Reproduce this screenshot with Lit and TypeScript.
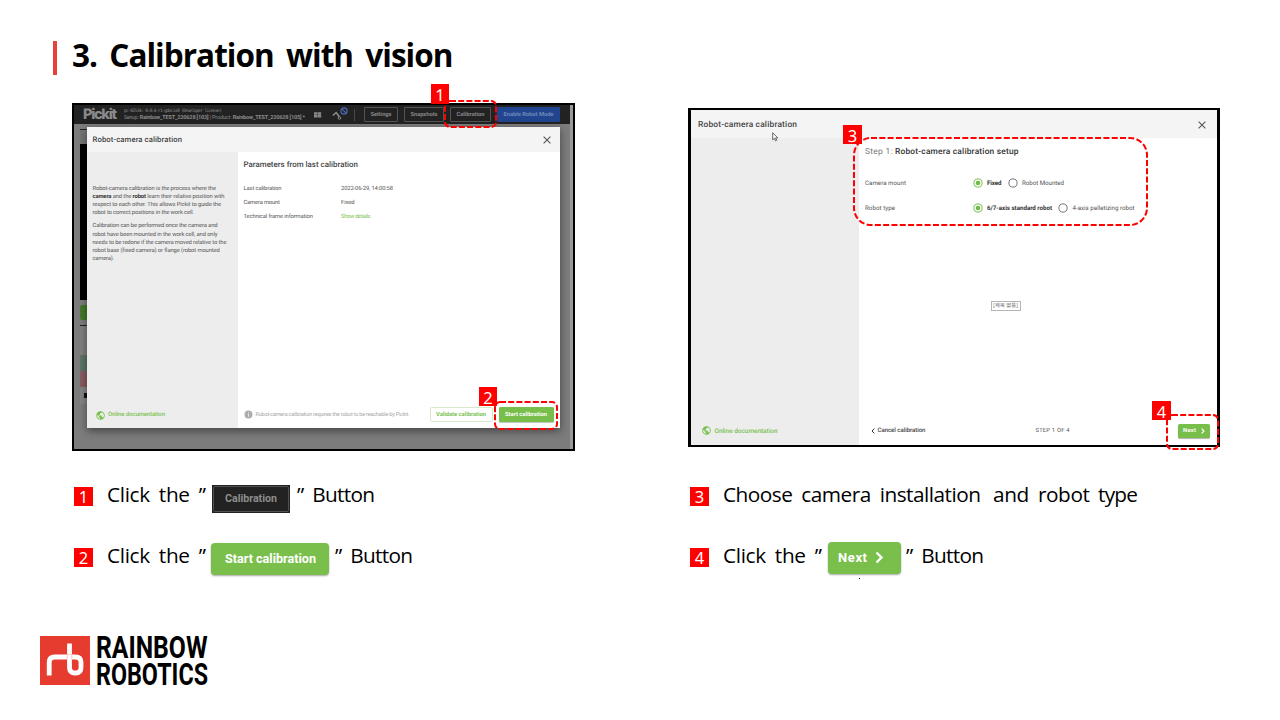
import { LitElement, html, svg, css } from "lit";
import { customElement, property } from "lit/decorators.js";

/** One line of text that fills exactly `w` pixels, by tracking or by squeezing. */
@customElement("fit-text")
class FitText extends LitElement {
  @property({ type: Number }) w = 0;
  @property({ type: Boolean }) squeeze = false;
  static styles = css`
    :host { display: block; white-space: pre; flex: none; text-align: left; }
    span { display: inline-block; transform-origin: 0 50%; vertical-align: top; }
  `;
  render() { return html`<span><slot></slot></span>`; }
  firstUpdated() {
    this.fit();
    document.fonts.ready.then(() => this.fit());
  }
  fit() {
    const s = this.renderRoot.querySelector("span") as HTMLElement;
    s.style.letterSpacing = "0px";
    s.style.transform = "none";
    this.style.width = this.w + "px";
    const natural = s.getBoundingClientRect().width;
    const n = (this.textContent || "").length;
    if (this.squeeze) s.style.transform = `scaleX(${this.w / natural})`;
    else if (n > 1) s.style.letterSpacing = (this.w - natural) / (n - 1) + "px";
  }
}

const closeIcon = svg`<svg class="x" width="8" height="8" viewBox="0 0 8 8"><path d="M.6.6 7.4 7.4M7.4.6.6 7.4" stroke="#555" stroke-width="1.1" fill="none"/></svg>`;
const globe = svg`<svg width="9" height="9" viewBox="1.500 1.500 21 21"><path fill="#76c14b" d="M12 2C6.48 2 2 6.48 2 12s4.48 10 10 10 10-4.48 10-10S17.52 2 12 2zm-1 17.93c-3.95-.49-7-3.85-7-7.93 0-.62.08-1.21.21-1.79L9 15v1c0 1.1.9 2 2 2v1.93zm6.9-2.54c-.26-.81-1-1.39-1.9-1.39h-1v-3c0-.55-.45-1-1-1H8v-2h2c.55 0 1-.45 1-1V7h2c1.1 0 2-.9 2-2v-.41c2.93 1.19 5 4.06 5 7.41 0 2.08-.8 3.97-2.1 5.39z"/></svg>`;
const radio = (on: boolean) => svg`<svg width="10" height="10" viewBox="0 0 10 10"><circle cx="5" cy="5" r="4.1" fill="#fff" stroke="${on ? "#76c14b" : "#777"}" stroke-width="1"/>${on ? svg`<circle cx="5" cy="5" r="2.3" fill="#6fbd44"/>` : ""}</svg>`;
const dashed = (w: number, h: number, r: number, dash: string) => svg`<svg width="${w}" height="${h}"><rect x="1" y="1" width="${w - 2}" height="${h - 2}" rx="${r}" fill="none" stroke="#f00" stroke-width="2" stroke-dasharray="${dash}"/></svg>`;

@customElement("app-root")
class AppRoot extends LitElement {
  static styles = css`
    :host { display: block; width: 1280px; height: 720px; background: #fff; overflow: hidden; color: #000; font-family: "Open Sans", "Noto Sans", sans-serif; }
    * { box-sizing: border-box; }
    svg { display: block; flex: none; }
    .slide { height: 720px; display: grid; grid-template-rows: 103px 382px 151px 84px; }
    header { display: flex; align-items: flex-start; padding: 41px 0 0 53px; }
    .bar { width: 4px; height: 34px; background: #e8413a; }
    .title { margin: -6px 0 0 15px; font-size: 31.5px; line-height: 40px; font-weight: 700; word-spacing: 5px; }
    .shots { display: flex; align-items: flex-start; padding-left: 72px; gap: 113px; }
    .ui { font-family: Roboto, sans-serif; text-rendering: geometricPrecision; font-size: 5.8px; color: #555; }
    .ui fit-text { line-height: 8px; }
    .shot { position: relative; border: 2px solid #000; flex: none; }
    .one { width: 503px; height: 348px; background: #7c7c7c; }
    .two { width: 532px; height: 339px; margin-top: 5px; background: #fff; border-width: 2px 3px 2px 3px; }

    .behind { display: grid; grid-template-columns: 496px 3px; height: 344px; }
    .scroll { background: #999; }
    .toolbar { height: 19px; background: #222; display: flex; align-items: center; padding-left: 9px; color: #858585; }
    .toolbar .brand { font: 800 14.5px/18px Inter, sans-serif; color: #8a8a8a; }
    .meta { margin: 1px 0 0 7px; width: 182px; }
    .meta .mono { font: 4.6px/6px "DejaVu Sans Mono", monospace; color: #8a8a8a; }
    .meta .set { line-height: 6px; font-size: 5.5px; color: #8a8a8a; }
    .meta b { color: inherit; }
    .grid { margin-left: 8px; }
    .arm { margin-left: 10px; }
    .sep { width: 1px; height: 12px; background: #484848; margin: 0 9px 0 5px; }
    .tb { height: 15px; border: 1px solid #555; border-radius: 1px; display: flex; align-items: center; justify-content: center; margin-right: 6px; font-weight: 700; font-size: 5.8px; }
    .tb.blue { background: #20458e; border-color: #20458e; color: #6d87b9; margin: 0; }
    .strip { width: 8px; margin-left: 6px; padding-top: 5px; }
    .strip div { width: 8px; }
    .s1 { height: 15px; border-top: 1px solid #222; background: #747474; }
    .s2 { height: 156px; background: #000; }
    .s3 { height: 15px; margin: 5px 0; background: #43782a; border-radius: 2px 0 0 2px; }
    .s4 { height: 30px; border-top: 1px solid #222; background: #808080; }
    .s5 { height: 16px; background: #5d7467; }
    .s6 { height: 16px; background: #875c60; }
    .s7 { height: 17px; background: #848484; padding: 6px 0 0 4px; }
    .s7 i { display: block; width: 4px; height: 5px; background: #111; }

    .modal { position: absolute; left: 12.5px; top: 22px; width: 473.5px; height: 300.5px; background: #fff; box-shadow: 0 3px 8px rgba(0,0,0,.45); }
    .mhead { background: #f4f4f4; display: flex; justify-content: space-between; align-items: center; color: #444; font-weight: 500; font-size: 7.7px; }
    .one .mhead { height: 25px; padding: 1px 9.5px 0 6px; }
    .one .mbody { display: grid; grid-template-columns: 151.5px 1fr; height: 275.5px; }
    .side { background: #ededed; display: flex; flex-direction: column; }
    .one .side { padding: 32.5px 0 9px 6px; }
    .para { margin-bottom: 5.6px; }
    .para fit-text { line-height: 8.1px; }
    b { font-weight: 700; color: #333; }
    .doc { margin-top: auto; display: flex; align-items: center; color: #7cc254; font-weight: 500; font-size: 6px; }
    .one .doc { padding: 0 0 0 3.5px; gap: 3px; }
    .one .side { padding-bottom: 8px; }
    .main { display: flex; flex-direction: column; }
    .one .main { padding: 9px 6.5px 5.5px 5.5px; }
    .h { font-weight: 500; font-size: 7.9px; color: #444; }
    .params { margin-top: 15.5px; display: grid; grid-template-columns: 97.5px auto; row-gap: 6.2px; justify-content: start; }
    .link { color: #7cc254; }
    .foot { margin-top: auto; display: flex; align-items: center; }
    .note { margin-left: 3px; color: #a5a5a5; font-size: 5.5px; }
    .btn { display: flex; align-items: center; justify-content: center; border-radius: 1.5px; font-weight: 700; background: #78be4b; color: #fff; }
    .one .btn { height: 15px; width: 55px; margin-left: 6px; box-shadow: 0 1px 1px rgba(0,0,0,.25); }
    .one .btn.ghost { width: 63px; margin-left: auto; background: #fff; border: 1px solid #d8e8cc; color: #7cc254; box-shadow: none; }

    .two .mhead { height: 28px; padding: 2px 11px 0 7px; font-size: 8.4px; }
    .two .mbody { display: grid; grid-template-columns: 168px 1fr; height: 307px; }
    .two .side { padding: 0 0 10px 11px; }
    .two .doc { gap: 3.5px; font-size: 6.5px; }
    .two .main { padding: 10px 7px 7px 6px; }
    .head2 { display: flex; font-size: 8.4px; color: #777; }
    .head2 .h { color: #333; font-size: 8.4px; }
    .opts { display: grid; grid-template-columns: 107.5px auto; row-gap: 15px; margin-top: 21.5px; justify-content: start; font-size: 6.2px; }
    .opt { display: flex; align-items: center; height: 10px; gap: 4.5px; }
    .opts > fit-text { line-height: 10px; }
    .opt .on { font-weight: 700; color: #333; margin-right: 1.5px; }
    .tip { align-self: flex-start; margin: 88px 0 0 125.5px; border: 1px solid #b5b5b5; width: 30px; height: 10px; padding: 0 1.5px; font: 5.2px/8px "Noto Sans CJK KR", sans-serif; color: #555; }
    .chev { margin: 0 3px 0 5.5px; }
    .cancel { font-weight: 500; color: #444; font-size: 6.1px; }
    .step { margin-left: 110px; color: #555; }
    .two .btn { width: 32px; height: 14px; margin-left: auto; gap: 5px; box-shadow: 0 1px 1px rgba(0,0,0,.3); }
    .cursor { position: absolute; left: 81px; top: 22px; }

    .badge { background: #f00; color: #fff; display: flex; align-items: center; justify-content: center; width: 19px; height: 19px; font-size: 16.5px; line-height: 19px; flex: none; padding-top: 1px; font-family: "Noto Sans", sans-serif; font-weight: 400; }
    .over { position: absolute; }
    .b1 { left: 357px; top: -21px; width: 18px; height: 20px; }
    .d1 { left: 370px; top: -5px; }
    .b2 { left: 405px; top: 282px; width: 18px; }
    .d2 { left: 420px; top: 296px; }
    .b3 { left: 152px; top: 15px; }
    .d3 { left: 162px; top: 27px; }
    .b4 { left: 461px; top: 291px; }
    .d4 { left: 475px; top: 304px; }

    .steps { display: grid; grid-template-columns: 616px 1fr; grid-template-rows: 28px 33px; row-gap: 29px; padding-left: 74px; font-size: 20.8px; }
    .row { display: flex; align-items: center; word-spacing: 4px; }
    .row .badge { margin-right: 14px; margin-top: -6px; }
    .row fit-text { line-height: 28px; }
    .row .lead, .row .tail { margin-top: -10px; }
    .row .low { margin-top: -8px; }
    .row .badge.lo { margin-top: -3px; }
    .snip { font-family: Roboto, sans-serif; display: flex; align-items: center; flex: none; word-spacing: 0; }
    .dark { background: #222; width: 78px; height: 28px; padding: 1px; margin: 0 7px 0 6px; }
    .dark div { border: 1px solid #505050; border-radius: 2px; width: 76px; height: 26px; padding-left: 11px; color: #8d8d8d; font-weight: 700; font-size: 10.7px; }
    .dark fit-text { line-height: 24px; }
    .green { background: #7abf4c; border-radius: 4px; color: #fff; font-weight: 700; box-shadow: 0 1px 2px rgba(0,0,0,.35); margin-top: -1px; }
    .start { width: 118px; height: 32px; padding-left: 14px; margin: 0 6px 0 5px; font-size: 12.6px; }
    .next { width: 73px; height: 32px; padding-left: 10px; gap: 8px; margin: -2px 5px 0 6px; font-size: 13px; }
    .row .and { margin-left: 12px; }
    .row .type { margin-left: 8px; }
    .dot { position: absolute; left: 31px; top: 36px; width: 1px; height: 1px; background: #000; }
    .rel { position: relative; }

    footer { display: flex; padding-left: 40px; gap: 5.5px; align-items: flex-start; }
    .logo { font: 700 31.6px/27px Roboto, sans-serif; margin-top: -2px; }
  `;

  render() {
    return html`<div class="slide">
      <header><div class="bar"></div><fit-text class="title" w="381.5">3. Calibration with vision</fit-text></header>
      <div class="shots">${this.first()}${this.second()}</div>
      <div class="steps">
        <div class="row"><span class="badge">1</span><fit-text class="lead" w="99">Click the ”</fit-text>
          <div class="snip dark"><div><fit-text w="52">Calibration</fit-text></div></div><fit-text class="tail" w="78">” Button</fit-text></div>
        <div class="row"><span class="badge">3</span><fit-text class="lead" w="258">Choose camera installation</fit-text><fit-text class="lead and" w="97">and robot</fit-text><fit-text class="lead type" w="40">type</fit-text></div>
        <div class="row"><span class="badge lo">2</span><fit-text class="low" w="99">Click the ”</fit-text>
          <div class="snip green start"><fit-text w="91">Start calibration</fit-text></div><fit-text class="low" w="78">” Button</fit-text></div>
        <div class="row"><span class="badge lo">4</span><fit-text class="low" w="99">Click the ”</fit-text>
          <div class="snip green next rel"><fit-text w="29">Next</fit-text><svg width="9" height="13" viewBox="0 0 9 13"><path d="M1.5 1.5 6.5 6.5 1.5 11.5" fill="none" stroke="#fff" stroke-width="2.3"/></svg><i class="dot"></i></div><fit-text class="low" w="78">” Button</fit-text></div>
      </div>
      <footer>
        <svg width="50" height="49" viewBox="0 0 50 49"><rect width="50" height="49" fill="#e63c30"/><path fill="none" stroke="#fff" stroke-width="4.800" d="M9.200 39.500V26.500Q9.200 21 14.700 21H35.500Q41 21 41 26.500V31.500Q41 37 35.500 37H35Q29.500 37 29.500 31.500V7.500"/><path d="M31.800 18.600V23.400M27.200 18.600V23.400M27.200 18.600H31.800" stroke="#f3a8a2" stroke-width=".6" fill="none"/></svg>
        <div class="logo"><fit-text squeeze w="111.5">RAINBOW</fit-text><fit-text squeeze w="112">ROBOTICS</fit-text></div>
      </footer>
    </div>`;
  }

  first() {
    return html`<div class="shot one ui">
      <div class="behind"><div>
        <div class="toolbar"><fit-text class="brand" w="34">Pickit</fit-text>
          <div class="meta"><fit-text class="mono" w="98">pc-02134: 0.0.4-r1-gdecis0 (Developer license)</fit-text><fit-text class="set" w="181">Setup: <b>Rainbow_TEST_220628 [103]</b> | Product: <b>Rainbow_TEST_220628 [105] *</b></fit-text></div>
          <svg class="grid" width="8" height="6" viewBox="0 0 8 6"><path fill="#8a8a8a" d="M0 .3h3.400v2.400H0zM3.800 .3h3.400v2.400H3.800zM0 3.100h3.400v2.400H0zM3.800 3.100h3.400v2.400H3.800z"/></svg>
          <svg class="arm" width="17" height="15" viewBox="0 0 17 15"><path d="M.8 8.500 4.200 5.500 7.500 10" fill="none" stroke="#8e8e8e" stroke-width="1.500"/><circle cx="7.500" cy="11" r="1.300" fill="none" stroke="#8e8e8e" stroke-width=".9"/><circle cx="12" cy="4" r="3.100" fill="none" stroke="#4a6cb8" stroke-width="1.200"/><path d="M9.800 1.800 14.200 6.200" stroke="#4a6cb8" stroke-width="1.200"/></svg>
          <i class="sep"></i>
          <div class="tb" style="width:34px"><fit-text w="21">Settings</fit-text></div>
          <div class="tb" style="width:40px"><fit-text w="27">Snapshots</fit-text></div>
          <div class="tb" style="width:41px"><fit-text w="28">Calibration</fit-text></div>
          <div class="tb blue" style="width:63px"><fit-text w="50">Enable Robot Mode</fit-text></div>
        </div>
        <div class="strip"><div class="s1"></div><div class="s2"></div><div class="s3"></div><div class="s4"></div><div class="s5"></div><div class="s6"></div><div class="s7"><i></i></div></div>
      </div><div class="scroll"></div></div>
      <div class="modal">
        <div class="mhead"><fit-text w="89.5">Robot-camera calibration</fit-text>${closeIcon}</div>
        <div class="mbody">
          <div class="side">
            <div class="para"><fit-text w="123.5">Robot-camera calibration is the process where the</fit-text><fit-text w="132"><b>camera</b> and the <b>robot</b> learn their relative position with</fit-text><fit-text w="128.5">respect to each other. This allows Pickit to guide the</fit-text><fit-text w="101.5">robot to correct positions in the work cell.</fit-text></div>
            <div class="para"><fit-text w="125">Calibration can be performed once the camera and</fit-text><fit-text w="125">robot have been mounted in the work cell, and only</fit-text><fit-text w="134">needs to be redone if the camera moved relative to the</fit-text><fit-text w="127">robot base (fixed camera) or flange (robot mounted</fit-text><fit-text w="21.5">camera).</fit-text></div>
            <div class="doc">${globe}<fit-text w="57">Online documentation</fit-text></div>
          </div>
          <div class="main">
            <fit-text class="h" w="114.5">Parameters from last calibration</fit-text>
            <div class="params">
              <fit-text w="38">Last calibration</fit-text><fit-text w="52">2022-06-29, 14:00:58</fit-text>
              <fit-text w="36.5">Camera mount</fit-text><fit-text w="13.5">Fixed</fit-text>
              <fit-text w="69.5">Technical frame information</fit-text><fit-text class="link" w="29.5">Show details</fit-text>
            </div>
            <div class="foot"><svg width="9" height="9" viewBox="0 0 9 9"><circle cx="4.500" cy="4.500" r="4" fill="#adadad"/><path d="M4.500 4v2.700M4.500 2.200v1" stroke="#eee" stroke-width=".9"/></svg><fit-text class="note" w="154">Robot-camera calibration requires the robot to be reachable by Pickit.</fit-text>
              <div class="btn ghost"><fit-text w="50">Validate calibration</fit-text></div><div class="btn"><fit-text w="42">Start calibration</fit-text></div></div>
          </div>
        </div>
      </div>
      <div class="over d1">${dashed(53, 28, 5, "6 2.2")}</div><span class="over badge b1">1</span>
      <div class="over d2">${dashed(64, 29, 5, "6 2.2")}</div><span class="over badge b2">2</span>
    </div>`;
  }

  second() {
    return html`<div class="shot two ui">
      <div class="mhead"><fit-text w="99">Robot-camera calibration</fit-text>${closeIcon}</div>
      <div class="mbody">
        <div class="side"><div class="doc">${globe}<fit-text w="63">Online documentation</fit-text></div></div>
        <div class="main">
          <div class="head2"><fit-text w="30">Step 1: </fit-text><fit-text class="h" w="123.5">Robot-camera calibration setup</fit-text></div>
          <div class="opts">
            <fit-text w="41">Camera mount</fit-text><div class="opt">${radio(true)}<fit-text class="on" w="14.5">Fixed</fit-text>${radio(false)}<fit-text w="42">Robot Mounted</fit-text></div>
            <fit-text w="30">Robot type</fit-text><div class="opt">${radio(true)}<fit-text class="on" w="65">6/7-axis standard robot</fit-text>${radio(false)}<fit-text w="62">4-axis palletizing robot</fit-text></div>
          </div>
          <div class="tip"><fit-text w="25">[제목 없음]</fit-text></div>
          <div class="foot"><svg class="chev" width="4" height="6" viewBox="0 0 4 6"><path d="M3.300.6 1 3 3.300 5.400" fill="none" stroke="#333" stroke-width="1"/></svg><fit-text class="cancel" w="48">Cancel calibration</fit-text><fit-text class="step" w="34">STEP 1 OF 4</fit-text>
            <div class="btn"><fit-text w="13">Next</fit-text><svg width="4" height="6" viewBox="0 0 4 6"><path d="M.7.6 3 3 .7 5.400" fill="none" stroke="#fff" stroke-width="1.200"/></svg></div></div>
        </div>
      </div>
      <svg class="cursor" width="7" height="10" viewBox="0 0 7 10"><path d="M.7.8V7.800L2.400 6.300 3.500 8.900 4.700 8.400 3.600 5.900H5.800Z" fill="#fff" stroke="#444" stroke-width=".8"/></svg>
      <div class="over d3">${dashed(295, 89, 17, "6 2.300")}</div><span class="over badge b3">3</span>
      <div class="over d4">${dashed(53, 36, 5, "6 2.200")}</div><span class="over badge b4">4</span>
    </div>`;
  }
}
